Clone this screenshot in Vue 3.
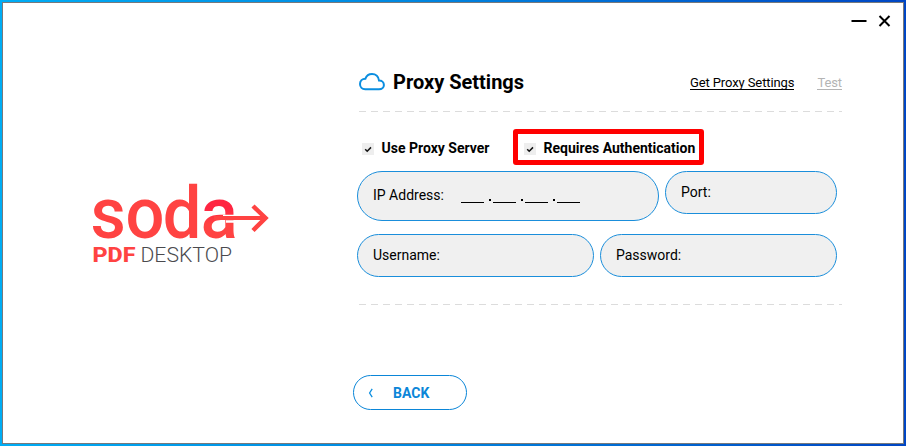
<template>
  <div class="desktop">
    <div class="window">
      <div class="titlebar">
        <button type="button" class="window-btn" aria-label="Minimize">
          <svg width="16" height="14" viewBox="0 0 16 14"><path d="M0.5 7H15.5" stroke="#000" stroke-width="2" /></svg>
        </button>
        <button type="button" class="window-btn" aria-label="Close">
          <svg width="14" height="14" viewBox="0 0 14 14"><path d="M2.5 2L12.5 12M12.5 2L2.5 12" stroke="#000" stroke-width="2" /></svg>
        </button>
      </div>

      <div class="content">
        <aside class="brand">
          <svg class="logo" width="180" height="84" viewBox="0 0 180 84">
            <defs>
              <linearGradient id="fade" x1="0" y1="0" x2="0" y2="1">
                <stop offset="0.45" stop-color="#ff2541" />
                <stop offset="0.64" stop-color="#ff4342" />
              </linearGradient>
            </defs>
            <g class="wordmark" transform="scale(0.94 1)">
              <text x="-1.7" y="55">s</text>
              <text x="35.7" y="55">o</text>
              <text x="75.4" y="55">d</text>
              <text x="115.6" y="55" fill="url(#fade)">a</text>
            </g>
            <path d="M131 33H144M134 38.5H146" stroke="#fff" stroke-width="2.5" />
            <path d="M122 35H174" stroke="#ff4342" stroke-width="4" fill="none" />
            <path d="M161 23L173.5 35L161 47.5" stroke="#ff4342" stroke-width="4.5" fill="none" />
            <text class="pdf" x="0.5" y="78.5" textLength="43" lengthAdjust="spacingAndGlyphs">PDF</text>
            <text class="edition" x="48.5" y="78.5" textLength="91.5" lengthAdjust="spacingAndGlyphs">DESKTOP</text>
          </svg>
        </aside>

        <main class="panel">
          <header class="panel-header">
            <svg width="26" height="18" viewBox="0 0 26 18">
              <path
                d="M6.2 16.2H20C23 16.2 24.9 14.3 24.9 11.9C24.9 9.2 22.7 7.5 20 7.5C19.6 3.7 16.8 1 13 1C9.8 1 7.5 2.7 6.4 5.7C3.2 5.8 1 8 1 10.9C1 14 3.2 16.2 6.2 16.2Z"
                fill="none"
                stroke="#0b8ee0"
                stroke-width="2"
              />
            </svg>
            <h1>Proxy Settings</h1>
            <a class="link">Get Proxy Settings</a>
            <a class="link disabled">Test</a>
          </header>
          <div class="divider"></div>

          <div class="options">
            <label v-for="option in options" :key="option.label" class="option" :class="{ highlighted: option.highlighted }">
              <span class="checkbox" @click="option.checked = !option.checked">
                <svg v-if="option.checked" width="12" height="12" viewBox="0 0 12 12">
                  <path d="M3.2 6.2L5.2 8.2L9 4.4" fill="none" stroke="#111" stroke-width="1.5" />
                </svg>
              </span>
              <span class="option-text">{{ option.label }}</span>
            </label>
          </div>

          <form class="fields" @submit.prevent>
            <div class="row">
              <div class="field ip">
                <span>IP Address:</span>
                <span class="mask">
                  <template v-for="n in 4" :key="n">
                    <i class="blank"></i><i v-if="n < 4" class="dot"></i>
                  </template>
                </span>
              </div>
              <div class="field port"><span>Port:</span></div>
            </div>
            <div class="row">
              <div class="field"><span>Username:</span></div>
              <div class="field"><span>Password:</span></div>
            </div>
          </form>
          <div class="divider"></div>

          <button type="button" class="back">
            <svg width="6" height="10" viewBox="0 0 6 10">
              <path d="M4.2 0.8L1.6 5L4.2 9.2" fill="none" stroke="#0b8ee0" stroke-width="1.3" />
            </svg>
            <span>BACK</span>
          </button>
        </main>
      </div>
    </div>
  </div>
</template>

<script setup>
import { ref } from 'vue';

const options = ref([
  { label: 'Use Proxy Server', checked: true, highlighted: false },
  { label: 'Requires Authentication', checked: true, highlighted: true },
]);
</script>

<style>
body {
  margin: 0;
}
</style>

<style scoped>
.desktop {
  box-sizing: border-box;
  height: 446px;
  padding: 2px;
  background: linear-gradient(90deg, #00adf5 0%, #0087e0 45%, #0046c4 100%);
  font-family: Roboto, "Liberation Sans", sans-serif;
  color: #000;
}

.window {
  box-sizing: border-box;
  height: 442px;
  border: 1px solid #77797c;
  background: #fff;
}

.titlebar {
  display: flex;
  justify-content: flex-end;
  gap: 10px;
  height: 32px;
  padding: 11px 12px 0 0;
  box-sizing: border-box;
}

.window-btn {
  display: block;
  height: 14px;
  padding: 0;
  border: none;
  background: none;
}

.window-btn svg {
  display: block;
}

.content {
  display: flex;
}

.brand {
  flex: none;
  width: 350px;
  padding: 148px 0 0 89px;
  box-sizing: border-box;
}

.logo {
  display: block;
  overflow: visible;
}

.wordmark {
  font-size: 73px;
  font-weight: 500;
  fill: #ff4342;
}

.pdf {
  font-size: 20px;
  font-weight: 800;
  fill: #ff4342;
}

.edition {
  font-size: 20px;
  font-weight: 300;
  fill: #4a4a4e;
}

.panel {
  width: 490px;
}

.panel-header {
  display: flex;
  align-items: center;
  width: 483px;
  height: 24px;
  margin: 35px 0 0 6px;
}

h1 {
  flex: 1;
  margin: 0 0 0 8px;
  font-size: 20px;
  line-height: 24px;
  font-weight: 700;
}

.link {
  font-size: 13px;
  line-height: 15px;
  letter-spacing: -0.1px;
  border-bottom: 1px solid #000;
  height: 14px;
  cursor: pointer;
}

.link.disabled {
  margin-left: 23px;
  color: #b4b4b4;
  border-color: #b4b4b4;
}

.divider {
  width: 483px;
  height: 1px;
  margin-left: 6px;
  background: repeating-linear-gradient(90deg, #dcdcdc 0 7px, transparent 7px 12px);
}

.panel-header + .divider {
  margin-top: 17px;
}

.options {
  display: flex;
  justify-content: space-between;
  width: 342px;
  height: 36px;
  margin: 17px 0 0 9px;
}

.option {
  display: flex;
  align-items: center;
  font-size: 14px;
  font-weight: 700;
  white-space: nowrap;
}

.option.highlighted {
  box-sizing: border-box;
  width: 191px;
  padding-left: 6px;
  border: 5px solid #f00;
  border-radius: 3px;
}

.checkbox {
  width: 12px;
  height: 12px;
  margin: 3px 7.5px 0 0;
  background: #eee;
}

.checkbox svg {
  display: block;
}

.option-text {
  margin-top: 1px;
}

.fields {
  width: 480px;
  margin: 6px 0 0 4px;
}

.row {
  display: flex;
  align-items: flex-start;
  gap: 6px;
}

.row + .row {
  margin-top: 13px;
}

.field {
  flex: 1;
  display: flex;
  align-items: center;
  box-sizing: border-box;
  height: 43px;
  padding: 0 0 2px 15px;
  border: 1px solid #1a8edb;
  border-radius: 25px;
  background: #f0f0f0;
  font-size: 14px;
}

.field.ip {
  flex: none;
  width: 302px;
  height: 50px;
}

.mask {
  display: flex;
  align-items: flex-end;
  margin: 11px 0 0 17px;
}

.blank {
  width: 23px;
  height: 1px;
  background: #000;
}

.dot {
  width: 2px;
  height: 2px;
  margin: 0 2px 2px 5px;
  background: #000;
}

.fields + .divider {
  margin-top: 27px;
}

.back {
  display: flex;
  align-items: center;
  box-sizing: border-box;
  width: 114px;
  height: 35px;
  margin-top: 70px;
  padding: 0 0 0 14px;
  border: 1px solid #0b86d8;
  border-radius: 18px;
  background: #fff;
  color: #0b86d8;
  font-family: inherit;
  font-size: 14px;
  font-weight: 700;
  cursor: pointer;
}

.back span {
  margin: 1px 0 0 19px;
}
</style>
